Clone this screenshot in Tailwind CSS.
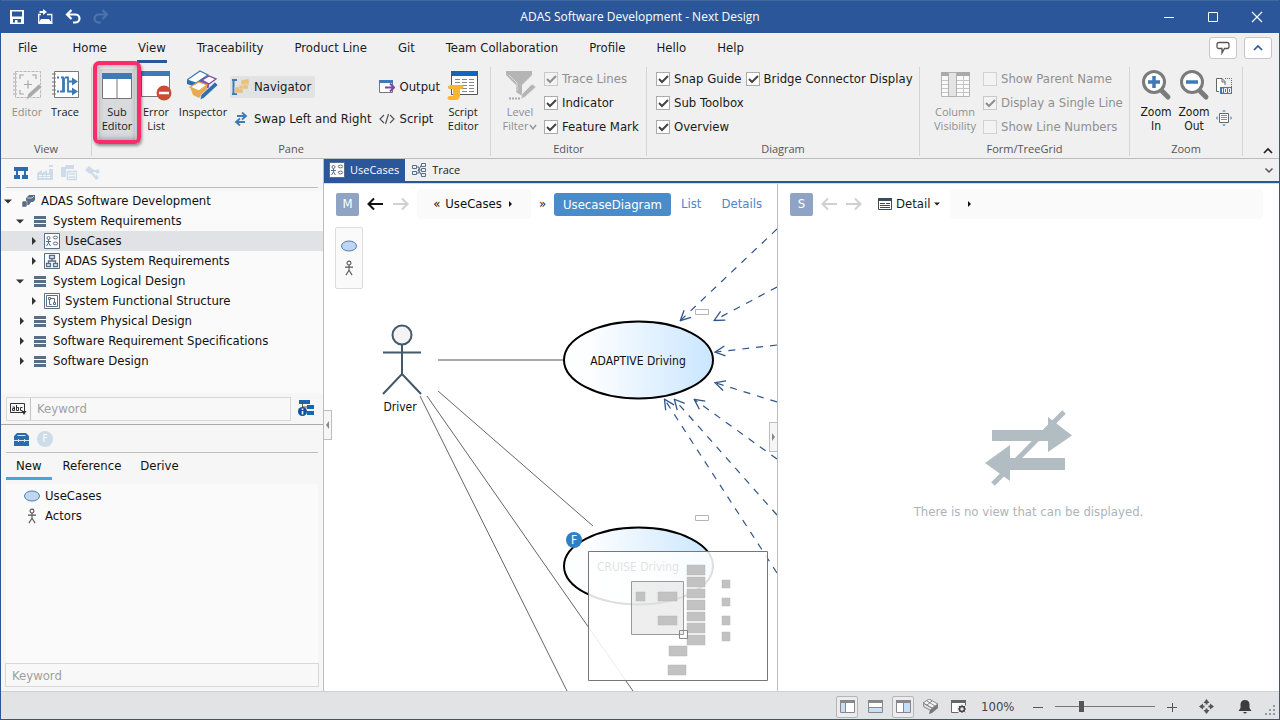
<!DOCTYPE html>
<html lang="en">
<head>
  <meta charset="UTF-8" />
  <meta name="viewport" content="width=device-width, initial-scale=1.0" />
  <title>ADAS Software Development - Next Design</title>
  <script src="https://cdn.jsdelivr.net/npm/@tailwindcss/browser@4"></script>
</head>
<body class="h-screen flex flex-col overflow-hidden border-x border-b border-[#2b579a] bg-[#f0f0f0] font-['DejaVu_Sans_Condensed','DejaVu_Sans',sans-serif] text-[13px] leading-5 text-[#1a1a1a]">

  <!-- shared icons -->
  <svg class="hidden">
    <symbol id="check" viewBox="0 0 14 14"><path d="M3 7l3 3 6-6" fill="none" stroke="currentColor" stroke-width="2" /></symbol>
    <symbol id="open" viewBox="0 0 8 8"><path d="M0 2.500h8l-4 4z" fill="#333" /></symbol>
    <symbol id="closed" viewBox="0 0 8 8"><path d="M2 0l4 4-4 4z" fill="#333" /></symbol>
    <symbol id="layers" viewBox="0 0 12 11"><path d="M0 0h12v3H0zM0 4h12v3H0zM0 8h12v3H0z" fill="#596d87" /></symbol>
    <symbol id="usecase" viewBox="0 0 16 16">
      <path d="M.5.5h15v15H.5z" fill="#fff" stroke="#596d87" />
      <g fill="none" stroke="#596d87"><circle cx="4.500" cy="5" r="1.500" /><path d="M4.500 6.500v3.500M2 8.500h5M2.500 13l2-3 2 3" /><ellipse cx="11.500" cy="4.500" rx="2.200" ry="1.400" /><ellipse cx="11.500" cy="10.500" rx="2.200" ry="1.400" /></g>
    </symbol>
    <symbol id="actor" viewBox="0 0 16 18"><g fill="none" stroke="#555" stroke-width="1.200"><circle cx="8" cy="3.500" r="2.200" /><path d="M8 5.700v6M3.500 8h9M4.500 17l3.500-5.500 3.500 5.500" /></g></symbol>
    <symbol id="bubble" viewBox="0 0 16 12"><ellipse cx="8" cy="6" rx="7.500" ry="5" fill="#bfd6ee" stroke="#4a80bd" /></symbol>
    <symbol id="left" viewBox="0 0 17 14"><path d="M16 7H1.500M7 1.500L1.500 7l5.500 5.500" fill="none" stroke="currentColor" stroke-width="2" /></symbol>
    <symbol id="right" viewBox="0 0 17 14"><path d="M1 7h14.500M10 1.500L15.500 7l-5.500 5.500" fill="none" stroke="currentColor" stroke-width="2" /></symbol>
  </svg>

  <!-- title bar -->
  <header class="grid grid-cols-[1fr_auto_1fr] items-center h-[33px] shrink-0 bg-[#2b579a] text-white border-t border-[#41699f]">
    <div class="flex items-center gap-3 pl-2">
      <button aria-label="Save" class="size-4"><svg class="size-4" viewBox="0 0 16 16"><path fill-rule="evenodd" d="M1 1h14v14H1zM3 2.500v5h10v-5zM4 10v3.500h2V11h2.500v2.500H12V10z" fill="#fff" /></svg></button>
      <button aria-label="Open" class="size-4"><svg class="size-4" viewBox="0 0 16 16"><path d="M1.700 14V5.500H4M10 5.500h4.800V14" fill="none" stroke="#fff" stroke-width="1.300" /><path d="M1 15l3-5h8l4 5zM6 0l4 3-4 3V4H2.500V2H6z" fill="#fff" /></svg></button>
      <button aria-label="Undo" class="size-4"><svg class="size-4" viewBox="0 0 16 16"><path d="M2 5.500h8a4.500 4 0 0 1 0 8H8M6.500 1L2 5.500 6.500 10" fill="none" stroke="#fff" stroke-width="2.200" /></svg></button>
      <button aria-label="Redo" class="size-4" disabled><svg class="size-4" viewBox="0 0 16 16"><path d="M14 5.500H6a4.500 4 0 0 0 0 8h2M9.500 1L14 5.500 9.500 10" fill="none" stroke="#4d73ab" stroke-width="2.200" /></svg></button>
    </div>
    <h1 class="text-[12px] font-['Open_Sans','Noto_Sans',sans-serif]">ADAS Software Development - Next Design</h1>
    <div class="flex justify-end gap-8 pr-4">
      <button aria-label="Minimize"><svg class="size-3" viewBox="0 0 12 12"><path d="M1 6.500h10" stroke="#fff" /></svg></button>
      <button aria-label="Maximize"><svg class="size-3" viewBox="0 0 12 12"><path d="M1.500 1.500h9v9h-9z" fill="none" stroke="#fff" /></svg></button>
      <button aria-label="Close"><svg class="size-3" viewBox="0 0 12 12"><path d="M1 1l10 10M11 1L1 11" stroke="#fff" stroke-width="1.200" /></svg></button>
    </div>
  </header>

  <!-- ribbon tabs -->
  <nav class="flex items-center h-[30px] shrink-0 pl-[17px] pr-[7px] gap-[31px]">
    <a href="#">File</a>
    <a href="#" class="ml-1">Home</a>
    <a href="#" class="relative">View<span class="absolute -left-px -right-px -bottom-[5px] h-[3px] bg-[#2b579a]"></span></a>
    <a href="#">Traceability</a>
    <a href="#">Product Line</a>
    <a href="#">Git</a>
    <a href="#">Team Collaboration</a>
    <a href="#">Profile</a>
    <a href="#">Hello</a>
    <a href="#">Help</a>
    <div class="ml-auto flex gap-[7px]">
      <button aria-label="Feedback" class="w-7 h-[22px] grid place-items-center bg-white border border-[#c6c6c6] rounded-[3px]"><svg class="size-[14px]" viewBox="0 0 14 14"><path d="M3 1.500h8q2 0 2 2v2q0 2-2 2H8.500L6 12V7.500H3q-2 0-2-2v-2q0-2 2-2z" fill="none" stroke="#555" stroke-width="1.300" /></svg></button>
      <button aria-label="Collapse" class="w-7 h-[22px] grid place-items-center bg-white border border-[#c6c6c6] rounded-[3px]"><svg class="size-[10px]" viewBox="0 0 10 10"><path d="M1 7l4-4 4 4" fill="none" stroke="#2b579a" stroke-width="1.700" /></svg></button>
    </div>
  </nav>

  <!-- ribbon -->
  <section class="flex h-[96px] shrink-0 pt-1 pb-[2px] border-b border-[#bdbdbd]">
    <div class="w-[91px] shrink-0 flex flex-col border-r border-[#d4d4d4] font-['Open_Sans','Noto_Sans',sans-serif] text-[11px] leading-[14px]">
      <div class="flex flex-1 pl-2 pt-[2px]">
        <button disabled class="w-9 flex flex-col items-center gap-1 text-[#8f8f8f] self-start">
          <svg class="size-8" viewBox="0 0 32 32"><path d="M4.500 2.500h25v26h-25z" fill="#f3f3f3" stroke="#b9b9b9" stroke-dasharray="3 1" /><path d="M2 5h4M2 9h4M2 13h4M2 17h4M2 21h4M2 25h4" stroke="#aaa" /><path d="M9 10V6h4M21 6h4v4M9 21v4h4M13 15.500h8M17 11.500v8" fill="none" stroke="#a8a8a8" stroke-width="1.200" /><path d="M15 31l2-6 11-10 3 3-11 10z" fill="#aaa" stroke="#f0f0f0" stroke-width=".6" /></svg>
          Editor
        </button>
        <button class="w-10 flex flex-col items-center gap-1 self-start">
          <svg class="size-8" viewBox="0 0 32 32"><path d="M5.500 2.500h24v26h-24z" fill="#fff" stroke="#777" /><path d="M3 5h4M3 9h4M3 13h4M3 17h4M3 21h4M3 25h4" stroke="#777" /><path d="M8 8.500h2M8 22.500h2M12 8.500h2v14h-3M16 8.500h3v14h7M12 22.500h3v-14M20 12.500h5" fill="none" stroke="#3c78b4" stroke-width="1.800" /><path d="M23 8.500l6 4-6 4zM23 18.500l6 4-6 4z" fill="#3c78b4" /></svg>
          Trace
        </button>
      </div>
      <h2 class="text-center text-[#555]">View</h2>
    </div>

    <div class="w-[399px] shrink-0 flex flex-col border-r border-[#d4d4d4]">
      <div class="flex flex-1 pl-[7px]">
        <div class="flex pt-[2px] font-['Open_Sans','Noto_Sans',sans-serif] text-[11px] leading-[14px]">
          <button aria-pressed="true" class="relative w-9 h-[71px] pt-1 flex flex-col items-center gap-1 self-start bg-[#d8dadd]">
            <svg class="w-[30px] h-7 shrink-0" viewBox="0 0 30 28"><path d="M.5 1.500h29v24H.5z" fill="#fff" stroke="#777" /><path d="M0 0h30v6H0z" fill="#3f79b6" /><path d="M15 6v19" stroke="#777" /></svg>
            Sub<br>Editor
            <span class="absolute -inset-x-[6px] -top-[8px] -bottom-[4px] border-4 border-[#fb2c6c] rounded-[6px] shadow-[1px_2px_3px_#0006,inset_0_0_6px_#0006]"></span>
          </button>
          <button class="w-[42px] flex flex-col items-center gap-1 self-start">
            <svg class="size-8 shrink-0" viewBox="0 0 32 32"><path d="M1.500 3.500h28v24h-28z" fill="#fff" stroke="#777" /><path d="M1 2h29v5H1z" fill="#3f79b6" /><circle cx="24" cy="24" r="7.500" fill="#cc4b37" /><path d="M19 24h10" stroke="#fff" stroke-width="2.500" /></svg>
            Error<br>List
          </button>
          <button class="w-[52px] flex flex-col items-center gap-1 self-start">
            <svg class="size-8" viewBox="0 0 32 32"><path d="M0 11L13 2l8 4-12 8z" fill="#fff" stroke="#3c78b4" stroke-width="1.300" /><path d="M0 11l9 3v4l-9-3z" fill="#2f6fb0" /><path d="M9 14L17 9v4l-8 5z" fill="#2f6fb0" /><path d="M15 11l7-4 7 3-7 5z" fill="#fff" stroke="#7d48a5" stroke-width="1.300" /><path d="M15 11l7 4v5l-7-4z" fill="#8a50b0" /><path d="M3 18l9-5 8 3-8 6z" fill="#fff" stroke="#e5a64a" stroke-width="1.300" /><path d="M3 18l9 4 8-6v6l-8 7-6-3z" fill="#e8ab54" /><path d="M13 31l1-5L28 13l3 3-14 13z" fill="#2f6fb0" stroke="#fff" stroke-width=".6" /></svg>
            Inspector
          </button>
        </div>
        <div class="flex flex-col gap-[10px] pt-[9px] pl-[1px] items-start">
          <button aria-pressed="true" class="flex items-center gap-[5px] h-[22px] pl-[2px] pr-1 bg-[#e1e2e4] rounded-[2px]"><svg class="w-[17px] h-4 shrink-0" viewBox="0 0 17 16"><path d="M0 1h5M0 15h5M1.500 0v15" fill="none" stroke="#3f79b6" stroke-width="2" /><path d="M9 1h3l1-1h4v6H9zM7 6h3l1-1h5v5H7zM3 8h3l1-1h4v7H3z" fill="#eabf78" stroke="#e1e2e4" stroke-width=".5" /></svg>Navigator</button>
          <button class="flex items-center gap-[6px] h-[22px] pl-1"><svg class="size-[14px] shrink-0" viewBox="0 0 14 14"><path d="M3 4h8M3 10h8" stroke="#3f79b6" stroke-width="2" /><path d="M8 .5L12 4 8 7.500M6 6.500L2 10l4 3.500" fill="none" stroke="#3f79b6" stroke-width="1.800" /></svg>Swap Left and Right</button>
        </div>
        <div class="flex flex-col gap-[10px] pt-[9px] pl-2 items-start">
          <button class="flex items-center gap-1 h-[22px]"><svg class="size-4 shrink-0" viewBox="0 0 16 16"><path d="M.5 2.500h13v11H.5z" fill="#fff" stroke="#777" /><path d="M0 1h14v3H0z" fill="#3f79b6" /><path d="M6 8.500h8M11 4.500l4 4-4 4" fill="none" stroke="#7d48a5" stroke-width="2" /></svg>Output</button>
          <button class="flex items-center gap-1 h-[22px]"><svg class="size-4 shrink-0" viewBox="0 0 16 16"><path d="M5 4L1 8l4 4M11 4l4 4-4 4M9.500 3l-3 10" fill="none" stroke="#555" stroke-width="1.200" /></svg>Script</button>
        </div>
        <button class="w-[38px] ml-1 pt-[2px] flex flex-col items-center gap-1 self-start font-['Open_Sans','Noto_Sans',sans-serif] text-[11px] leading-[14px]">
          <svg class="size-8 shrink-0" viewBox="0 0 32 32"><path d="M4.500 3.500h26v22h-26z" fill="#fff" stroke="#555" /><path d="M4 2h27v5H4z" fill="#1565b8" /><path d="M8 10.500h5M15 10.500h5M22 10.500h5M8 13.500h5M15 13.500h5M22 13.500h5M15 16.500h5M22 16.500h5M15 19.500h5M22 19.500h5M15 22.500h5M22 22.500h5" stroke="#888" /><path d="M4 16h11q3 2 0 4h-2v7q-1 4-4 4H2q-3-2 0-4h4v-7H2q-3-3 2-4z" fill="#fdb42f" /></svg>
          Script<br>Editor
        </button>
      </div>
      <h2 class="text-center text-[#555] font-['Open_Sans','Noto_Sans',sans-serif] text-[11px] leading-[14px]">Pane</h2>
    </div>

    <div class="w-[156px] shrink-0 flex flex-col border-r border-[#d4d4d4]">
      <div class="flex flex-1 pl-2">
        <button disabled class="w-[42px] pt-[2px] flex flex-col items-center gap-1 self-start text-[#8f8f8f] font-['Open_Sans','Noto_Sans',sans-serif] text-[11px] leading-[14px]">
          <svg class="size-8 shrink-0" viewBox="0 0 32 32"><path d="M2 2h26v4L18 16v11l-6-4v-7L2 6z" fill="#b5b5b5" /><path d="M5 6l8 8v8" fill="none" stroke="#ddd" /><path d="M5 29.500h12" stroke="#aaa" stroke-width="2" stroke-dasharray="2 1" /><path d="M17 30l1-5 10-10 4 3-11 10z" fill="#b5b5b5" stroke="#f0f0f0" stroke-width=".6" /></svg>
          <span>Level<br>Filter<svg class="inline size-2 ml-px" viewBox="0 0 8 8"><path d="M1 2l3 4 3-4" fill="none" stroke="#8f8f8f" stroke-width="1.300" /></svg></span>
        </button>
        <div class="flex flex-col pl-[3px]">
          <label class="flex items-center gap-1 h-6 text-[#8f8f8f]"><span class="grid"><input type="checkbox" checked disabled class="appearance-none size-[14px] border border-[#c9c9c9] bg-[#f3f3f3] [grid-area:1/1]"><svg class="size-[14px] [grid-area:1/1]"><use href="#check" /></svg></span>Trace Lines</label>
          <label class="flex items-center gap-1 h-6"><span class="grid"><input type="checkbox" checked class="appearance-none size-[14px] border border-[#ababab] bg-white [grid-area:1/1]"><svg class="size-[14px] [grid-area:1/1] text-[#444] pointer-events-none"><use href="#check" /></svg></span>Indicator</label>
          <label class="flex items-center gap-1 h-6"><span class="grid"><input type="checkbox" checked class="appearance-none size-[14px] border border-[#ababab] bg-white [grid-area:1/1]"><svg class="size-[14px] [grid-area:1/1] text-[#444] pointer-events-none"><use href="#check" /></svg></span>Feature Mark</label>
        </div>
      </div>
      <h2 class="text-center text-[#555] font-['Open_Sans','Noto_Sans',sans-serif] text-[11px] leading-[14px]">Editor</h2>
    </div>

    <div class="w-[273px] shrink-0 flex flex-col border-r border-[#d4d4d4]">
      <div class="flex flex-1 gap-[2px] pl-[9px]">
        <div class="flex flex-col">
          <label class="flex items-center gap-1 h-6"><span class="grid"><input type="checkbox" checked class="appearance-none size-[14px] border border-[#ababab] bg-white [grid-area:1/1]"><svg class="size-[14px] [grid-area:1/1] text-[#444] pointer-events-none"><use href="#check" /></svg></span>Snap Guide</label>
          <label class="flex items-center gap-1 h-6"><span class="grid"><input type="checkbox" checked class="appearance-none size-[14px] border border-[#ababab] bg-white [grid-area:1/1]"><svg class="size-[14px] [grid-area:1/1] text-[#444] pointer-events-none"><use href="#check" /></svg></span>Sub Toolbox</label>
          <label class="flex items-center gap-1 h-6"><span class="grid"><input type="checkbox" checked class="appearance-none size-[14px] border border-[#ababab] bg-white [grid-area:1/1]"><svg class="size-[14px] [grid-area:1/1] text-[#444] pointer-events-none"><use href="#check" /></svg></span>Overview</label>
        </div>
        <label class="flex items-center gap-1 h-6 whitespace-nowrap"><span class="grid"><input type="checkbox" checked class="appearance-none size-[14px] border border-[#ababab] bg-white [grid-area:1/1]"><svg class="size-[14px] [grid-area:1/1] text-[#444] pointer-events-none"><use href="#check" /></svg></span>Bridge Connector Display</label>
      </div>
      <h2 class="text-center text-[#555] font-['Open_Sans','Noto_Sans',sans-serif] text-[11px] leading-[14px]">Diagram</h2>
    </div>

    <div class="w-[210px] shrink-0 flex flex-col border-r border-[#d4d4d4]">
      <div class="flex flex-1 pl-3 text-[#8f8f8f]">
        <button disabled class="w-[46px] pt-[2px] flex flex-col items-center gap-1 self-start font-['Open_Sans','Noto_Sans',sans-serif] text-[11px] leading-[14px]">
          <svg class="size-8 shrink-0" viewBox="0 0 32 32"><path d="M2.500 3.500h28v24h-28z" fill="#fafafa" stroke="#b5b5b5" /><path d="M2 3h29v4H2z" fill="#aaa" /><path d="M3 11.500h27M3 15.500h27M3 19.500h27M3 23.500h27M24.500 7v20" stroke="#c5c5c5" /><path d="M9.500 3.500h8v24h-8z" fill="#e4e4e4" stroke="#b0b0b0" /></svg>
          Column<br>Visibility
        </button>
        <div class="flex flex-col pl-[5px] whitespace-nowrap">
          <label class="flex items-center gap-1 h-6"><input type="checkbox" disabled class="appearance-none size-[14px] border border-[#d2d2d2] bg-[#f3f3f3]">Show Parent Name</label>
          <label class="flex items-center gap-1 h-6"><span class="grid"><input type="checkbox" checked disabled class="appearance-none size-[14px] border border-[#c9c9c9] bg-[#f3f3f3] [grid-area:1/1]"><svg class="size-[14px] [grid-area:1/1]"><use href="#check" /></svg></span>Display a Single Line</label>
          <label class="flex items-center gap-1 h-6"><input type="checkbox" disabled class="appearance-none size-[14px] border border-[#d2d2d2] bg-[#f3f3f3]">Show Line Numbers</label>
        </div>
      </div>
      <h2 class="text-center text-[#555] font-['Open_Sans','Noto_Sans',sans-serif] text-[11px] leading-[14px]">Form/TreeGrid</h2>
    </div>

    <div class="w-[113px] shrink-0 flex flex-col border-r border-[#d4d4d4] font-['Open_Sans','Noto_Sans',sans-serif] text-[11px] leading-[14px]">
      <div class="flex flex-1 pl-[7px] pt-[2px]">
        <button class="w-[38px] flex flex-col items-center gap-1 self-start">
          <svg class="size-8 shrink-0" viewBox="0 0 32 32"><path d="M20 20l8 8" stroke="#7b7b7b" stroke-width="5" stroke-linecap="round" /><circle cx="14" cy="13" r="10.500" fill="#fff" stroke="#7b7b7b" stroke-width="3" /><path d="M8 13h12M14 7v12" stroke="#3f79b6" stroke-width="3.500" /></svg>
          <span class="font-['DejaVu_Sans_Condensed','DejaVu_Sans',sans-serif] text-[12px] leading-[14px]">Zoom<br>In</span>
        </button>
        <button class="w-[38px] flex flex-col items-center gap-1 self-start">
          <svg class="size-8 shrink-0" viewBox="0 0 32 32"><path d="M20 20l8 8" stroke="#7b7b7b" stroke-width="5" stroke-linecap="round" /><circle cx="14" cy="13" r="10.500" fill="#fff" stroke="#7b7b7b" stroke-width="3" /><path d="M8 13h12" stroke="#3f79b6" stroke-width="3.500" /></svg>
          <span class="font-['DejaVu_Sans_Condensed','DejaVu_Sans',sans-serif] text-[12px] leading-[14px]">Zoom<br>Out</span>
        </button>
        <div class="flex flex-col gap-4 pt-[9px] pl-[3px]">
          <button aria-label="Zoom 100%"><svg class="size-4" viewBox="0 0 16 16"><path d="M3 13.500H.5V.5H6l3 3V7M6 .5V4h3" fill="#fff" stroke="#666" /><path d="M9 .5h6.500V9" fill="none" stroke="#666" stroke-dasharray="1 1" /><path d="M4 9h12v7H4z" fill="#3f79b6" /><path d="M6.500 10.500v4M8.500 10.500h2v4h-2zM12.500 10.500h2v4h-2z" fill="none" stroke="#fff" /></svg></button>
          <button aria-label="Fit"><svg class="size-4" viewBox="0 0 16 16"><path d="M3.500 3.500h9v9h-9z" fill="#fff" stroke="#666" /><path d="M5 5.500h6M5 7.500h6M5 9.500h6" stroke="#888" /><path d="M6 1.500L8 0l2 1.500zM6 14.500L8 16l2-1.500zM1.500 6L0 8l1.500 2zM14.500 6L16 8l-1.500 2z" fill="#3f79b6" /></svg></button>
        </div>
      </div>
      <h2 class="text-center text-[#555]">Zoom</h2>
    </div>
    <button aria-label="Collapse the ribbon" class="ml-auto mr-[6px] self-end"><svg class="w-[10px] h-[9px]" viewBox="0 0 10 9"><path d="M1 6l4-4 4 4" fill="none" stroke="#222" stroke-width="1.700" /></svg></button>
  </section>

  <main class="flex flex-1 min-h-0">
    <!-- navigator and toolbox -->
    <aside class="w-[323px] shrink-0 flex flex-col border-r border-[#bdbdbd] bg-[#f6f6f6]">
      <div class="flex items-center gap-2 h-[29px] shrink-0 mx-[5px] pl-2 border-b border-[#bdbdbd]">
        <button aria-label="Model"><svg class="w-[14px] h-4 mr-px" viewBox="0 0 14 16"><path d="M0 2h14v4H0zM0 10h6v4H0zM8 10h6v4H8z" fill="#2a6cad" /><path d="M3 5v6M11 5v6" stroke="#2a6cad" stroke-width="2" /></svg></button>
        <button aria-label="Product line"><svg class="size-4" viewBox="0 0 16 16"><path d="M0 15V8l5-3v3l5-3v3h2V4h4v11zM12 0h4v2h-4z" fill="#cddce8" /><path d="M2 10.500h12M2 12.500h12" stroke="#f6f6f6" stroke-dasharray="3 1" /></svg></button>
        <button aria-label="Project"><svg class="size-4" viewBox="0 0 16 16"><path d="M0 2h4l1-2h8v4H5v8H0z" fill="#cddce8" /><path d="M6.500 6.500h9v8h-9z" fill="#f6f6f6" stroke="#cddce8" stroke-width="1.500" /><path d="M8 9h6M8 12h6" stroke="#cddce8" stroke-width="1.500" /></svg></button>
        <button aria-label="Profile"><svg class="size-4" viewBox="0 0 16 16"><path d="M0 5l4-4 5 4-4 4zM10 6l3-2 2 3-3 2zM9 12l3-2 2 3-3 2z" fill="#cddce8" /><path d="M6 7l5 6M7 6h5" stroke="#cddce8" stroke-width="2" /></svg></button>
      </div>

      <ul class="grow shrink-0 mt-[3px] bg-[#fafafa] text-[#111]">
        <li class="flex items-center h-5 pl-[3px]"><svg class="size-2"><use href="#open" /></svg><svg class="size-[14px] ml-[10px] mr-[5px]" viewBox="0 0 14 14"><path d="M4 4l3-3h6v5l-2 2H9l-2 3H4z" fill="#596d87" /><path d="M5 4h5l2-2" fill="none" stroke="#c6cfd9" /><path d="M0 8l1-1h4v5l-1 1H0z" fill="#596d87" stroke="#fafafa" stroke-width=".5" /></svg>ADAS Software Development</li>
        <li class="flex items-center h-5 pl-[15px]"><svg class="size-2"><use href="#open" /></svg><svg class="w-3 h-[11px] ml-[10px] mr-[7px]"><use href="#layers" /></svg>System Requirements</li>
        <li class="flex items-center h-5 pl-[29px] bg-[#e1e2e6]"><svg class="size-2"><use href="#closed" /></svg><svg class="size-4 ml-[6px] mr-[5px]"><use href="#usecase" /></svg>UseCases</li>
        <li class="flex items-center h-5 pl-[29px]"><svg class="size-2"><use href="#closed" /></svg><svg class="size-4 ml-[6px] mr-[5px]" viewBox="0 0 16 16"><path d="M.5.500h15v15H.5z" fill="#fff" stroke="#596d87" /><path d="M5.500 2.500h5v3h-5zM2.500 10.500h4v3h-4zM9.500 10.500h4v3h-4zM8 6v2M4.500 10V8h7v2" fill="none" stroke="#596d87" stroke-width="1.300" /></svg>ADAS System Requirements</li>
        <li class="flex items-center h-5 pl-[15px]"><svg class="size-2"><use href="#open" /></svg><svg class="w-3 h-[11px] ml-[10px] mr-[7px]"><use href="#layers" /></svg>System Logical Design</li>
        <li class="flex items-center h-5 pl-[29px]"><svg class="size-2"><use href="#closed" /></svg><svg class="size-4 ml-[6px] mr-[5px]" viewBox="0 0 16 16"><path d="M.5.500h15v15H.5zM2.500 2.500h11v11h-11z" fill="#fff" stroke="#596d87" /><path d="M4.500 4.500h2v2h-2zM9.500 9.500h2v2h-2zM6.500 5.500h4v4M5.500 6.500v5h2" fill="none" stroke="#596d87" /></svg>System Functional Structure</li>
        <li class="flex items-center h-5 pl-[17px]"><svg class="size-2"><use href="#closed" /></svg><svg class="w-3 h-[11px] ml-2 mr-[7px]"><use href="#layers" /></svg>System Physical Design</li>
        <li class="flex items-center h-5 pl-[17px]"><svg class="size-2"><use href="#closed" /></svg><svg class="w-3 h-[11px] ml-2 mr-[7px]"><use href="#layers" /></svg>Software Requirement Specifications</li>
        <li class="flex items-center h-5 pl-[17px]"><svg class="size-2"><use href="#closed" /></svg><svg class="w-3 h-[11px] ml-2 mr-[7px]"><use href="#layers" /></svg>Software Design</li>
      </ul>

      <div class="flex items-center gap-[7px] h-8 shrink-0 pl-[5px] pr-2 border-b border-[#ababab]">
        <div class="flex flex-1 items-center h-6 border border-[#d8d8d8] bg-[#f8f8f8]">
          <button aria-label="Search target" class="w-6 h-[22px] grid place-items-center border-r border-[#bcc4ca]"><svg class="w-[17px] h-[13px]" viewBox="0 0 17 13"><path d="M.5 1.500h14v9H.5z" fill="none" stroke="#333" /><path d="M2.500 5h2v3.500h-2v-2h2M6.500 3v5.500h2V5.500h-2M12.500 5.500h-2v3h2" fill="none" stroke="#333" /><path d="M11.500 9h5L14 13z" fill="#333" /></svg></button>
          <input type="text" placeholder="Keyword" aria-label="Filter the tree" class="flex-1 min-w-0 px-[6px] bg-transparent placeholder:text-[#a0a0a0]">
        </div>
        <button aria-label="Display settings" class="size-[17px]"><svg class="size-[17px]" viewBox="0 0 17 17"><path d="M1 0h11v4H1zM9 5h7v4H9zM9 11h7v4H9z" fill="#1565b8" /><path d="M4.500 4v4M4 7h5" stroke="#555" /><circle cx="4.500" cy="11.500" r="4.500" fill="#1050a0" /><path d="M4.500 8.500V10M4.500 11v3.500" stroke="#fff" stroke-width="1.600" /></svg></button>
      </div>

      <div class="flex items-center gap-2 h-[28px] shrink-0 mx-[5px] pl-2 border-b border-[#bdbdbd]">
        <button aria-label="Toolbox"><svg class="w-[15px] h-4" viewBox="0 0 15 16"><path d="M0 5l3-3h9l3 3v4H0zM0 10h15v5H0z" fill="#2a6cad" /><path d="M3.500 4.500h8M0 9.500h15M4.500 8v3M10.500 8v3" stroke="#dbe6f0" /></svg></button>
        <button aria-label="Feature" class="size-4 rounded-full bg-[#cddce8] text-white text-[10px] leading-4">F</button>
      </div>
      <nav class="flex gap-[11px] h-[27px] shrink-0 pl-[5px] text-[#111]">
        <a href="#" class="h-[27px] px-[10px] leading-[25px] border-b-[3px] border-[#4ba3dc]">New</a>
        <a href="#" class="leading-[25px]">Reference</a>
        <a href="#" class="leading-[25px] ml-2">Derive</a>
      </nav>
      <ul class="h-[179px] shrink-0 mx-[5px] mt-1 bg-[#fafafa] pt-[2px] text-[#111]">
        <li class="flex items-center gap-[5px] h-5 pl-[18px]"><svg class="w-4 h-3"><use href="#bubble" /></svg>UseCases</li>
        <li class="flex items-center gap-[5px] h-5 pl-[18px]"><svg class="size-4"><use href="#actor" /></svg>Actors</li>
      </ul>
      <input type="text" placeholder="Keyword" aria-label="Filter the toolbox" class="h-6 shrink-0 ml-1 mr-[4px] mb-[4px] px-[6px] border border-[#d8d8d8] bg-[#f8f8f8] placeholder:text-[#a0a0a0]">
    </aside>

    <div class="flex-1 min-w-0 flex flex-col">
      <div class="flex h-6 shrink-0 border-b-2 border-[#2b579a] font-['Open_Sans','Noto_Sans',sans-serif] text-[11px]">
        <a href="#" class="flex items-center gap-[5px] pl-[5px] pr-[6px] bg-[#2b579a] text-white"><svg class="size-4"><use href="#usecase" /></svg>UseCases</a>
        <a href="#" class="flex items-center gap-[6px] pl-[7px]"><svg class="size-[14px]" viewBox="0 0 14 14"><path d="M.5 2.500h4v3h-4zM.5 8.500h4v3h-4zM9.500.5h4v3h-4zM9.500 5.500h4v3h-4zM9.500 10.500h4v3h-4zM4.500 4H7v6M4.500 10h3M6 8l3.500-6M6 7h3.500M7 8l2.500 4" fill="none" stroke="#596d87" /></svg>Trace</a>
        <button aria-label="Tab list" class="ml-auto mr-[5px]"><svg class="size-[10px]" viewBox="0 0 10 10"><path d="M1.500 3.500L5 7l3.500-3.500" fill="none" stroke="#555" stroke-width="1.500" /></svg></button>
      </div>

      <div class="flex flex-1 min-h-0 bg-white border-t border-[#dcdcdc]">
        <!-- main editor -->
        <section class="relative w-[454px] shrink-0 flex flex-col overflow-hidden border-r border-[#bdbdbd]">
          <div class="flex items-center h-10 shrink-0 pl-3 whitespace-nowrap">
            <span class="size-[23px] grid place-items-center rounded-[2px] bg-[#8fa4c4] text-white">M</span>
            <button aria-label="Back" class="ml-2 text-[#111]"><svg class="w-[17px] h-[14px]"><use href="#left" /></svg></button>
            <button aria-label="Forward" class="ml-2 text-[#d0d0d0]"><svg class="w-[17px] h-[14px]"><use href="#right" /></svg></button>
            <div class="flex items-center justify-center gap-[5px] w-[114px] h-[30px] ml-2 bg-[#fafafa] rounded-[3px] text-[#111]"><span>«</span>UseCases<svg class="size-2" viewBox="0 0 8 8"><path d="M2 1l3 3-3 3z" fill="#111" /></svg></div>
            <span class="w-[23px] text-center">»</span>
            <a href="#" class="h-[23px] px-[9px] leading-[24px] rounded-[3px] bg-[#4a8cca] text-white">UsecaseDiagram</a>
            <a href="#" class="ml-[10px] text-[#4a86c8]">List</a>
            <a href="#" class="ml-5 text-[#4a86c8]">Details</a>
          </div>

          <div class="relative flex-1 min-h-0 overflow-hidden">
            <svg class="absolute inset-0 w-full h-full">
              <defs>
                <linearGradient id="fade"><stop offset="0" stop-color="#fff" /><stop offset=".2" stop-color="#fbfdff" /><stop offset="1" stop-color="#cae6ff" /></linearGradient>
                <marker id="arrow" viewBox="0 0 14 12" refX="12" refY="6" markerWidth="14" markerHeight="12" markerUnits="userSpaceOnUse" orient="auto"><path d="M3 1l10 5-10 5" fill="none" stroke="#2f5488" stroke-width="1.300" /></marker>
              </defs>
              <g transform="translate(-324 -224)">
                <path d="M438 360h125" stroke="#a8a8a8" stroke-width="2" />
                <path d="M438 391l155 135M427 396l206 295M420 396l147 295" stroke="#666" />
                <g fill="none" stroke="#2f5488" stroke-width="1.200" stroke-dasharray="7 7">
                  <path d="M777 229l-96 91" marker-end="url(#arrow)" />
                  <path d="M777 287l-62 33" marker-end="url(#arrow)" />
                  <path d="M777 345l-61 7" marker-end="url(#arrow)" />
                  <path d="M777 402l-61-19" marker-end="url(#arrow)" />
                  <path d="M777 459l-82-59" marker-end="url(#arrow)" />
                  <path d="M777 515L675 400" marker-end="url(#arrow)" />
                  <path d="M777 573L665 400" marker-end="url(#arrow)" />
                </g>
                <g fill="none" stroke="#44596a" stroke-width="2">
                  <circle cx="402" cy="335" r="9.500" fill="#f3f3f3" />
                  <path d="M402 345v29M383 352.500h38M383 394l19-20 19 20" />
                </g>
                <text x="400" y="411" text-anchor="middle" font-size="12" fill="#111">Driver</text>
                <ellipse cx="638.500" cy="360" rx="74.500" ry="38.500" fill="url(#fade)" stroke="#000" stroke-width="2" />
                <text x="638" y="365" text-anchor="middle" font-size="12" fill="#111">ADAPTIVE Driving</text>
                <ellipse cx="638.500" cy="566" rx="74.500" ry="38.500" fill="url(#fade)" stroke="#000" stroke-width="2" />
                <text x="638" y="571" text-anchor="middle" font-size="12" fill="#111">CRUISE Driving</text>
                <path d="M695.500 309.500h13v5h-13zM695.500 515.500h13v5h-13z" fill="#fff" stroke="#b5b5b5" />
                <circle cx="574" cy="540" r="8" fill="#2e7fc4" />
                <text x="574" y="544" text-anchor="middle" font-size="12" fill="#fff">F</text>
              </g>
            </svg>

            <div class="absolute left-[11px] top-[3px] w-7 flex flex-col items-center gap-2 py-3 border border-[#dcdcdc] rounded-[2px] bg-[#fafafa]">
              <svg class="w-4 h-3"><use href="#bubble" /></svg>
              <svg class="size-4"><use href="#actor" /></svg>
            </div>

            <!-- overview -->
            <svg class="absolute right-[9px] bottom-[10px] w-[180px] h-[130px]" viewBox="588 551 180 130">
              <path d="M588.500 551.500h179v129h-179z" fill="#fff" fill-opacity=".87" stroke="#777" />
              <path d="M631.500 581.500h52v53h-52z" fill="#ddd" fill-opacity=".5" stroke="#999" />
              <path d="M687 565h18v10h-18zM687 577h18v10h-18zM687 589h18v9h-18zM687 600h18v10h-18zM687 612h18v9h-18zM687 623h18v10h-18zM687 635h18v10h-18zM658 592h19v9h-19zM658 616h19v9h-19zM636 592h9v9h-9zM669 646h18v10h-18zM668 665h18v10h-18zM722 580h8v8h-8zM722 598h8v8h-8zM722 616h8v9h-8zM722 632h8v9h-8z" fill="#c2c2c2" stroke="#b5b5b5" stroke-width=".5" />
              <path d="M679.500 630.500h8v8h-8z" fill="none" stroke="#888" />
            </svg>
          </div>
          <button aria-label="Hide the navigator" class="absolute left-0 top-[226px] w-2 h-[30px] grid place-items-center border border-l-0 border-[#bdbdbd] bg-[#f6f6f6]"><svg class="w-[5px] h-2" viewBox="0 0 5 8"><path d="M4 0v8L1 4z" fill="#888" /></svg></button>
          <button aria-label="Hide the sub editor" class="absolute right-0 top-[238px] w-2 h-[30px] grid place-items-center border border-r-0 border-[#bdbdbd] bg-[#f6f6f6]"><svg class="w-[5px] h-2" viewBox="0 0 5 8"><path d="M1 0v8l3-4z" fill="#888" /></svg></button>
        </section>

        <!-- sub editor -->
        <section class="flex-1 min-w-0 flex flex-col">
          <div class="flex items-center h-10 shrink-0 pl-3 pr-4">
            <span class="size-[23px] grid place-items-center rounded-[2px] bg-[#8fa4c4] text-white">S</span>
            <button aria-label="Back" class="ml-2 text-[#d0d0d0]"><svg class="w-[17px] h-[14px]"><use href="#left" /></svg></button>
            <button aria-label="Forward" class="ml-[7px] text-[#d0d0d0]"><svg class="w-[17px] h-[14px]"><use href="#right" /></svg></button>
            <button class="flex items-center gap-1 ml-4"><svg class="w-[14px] h-3" viewBox="0 0 14 12"><path d="M.5.500h13v11H.5z" fill="#fff" stroke="#3b4c5c" /><path d="M0 0h14v3H0z" fill="#3b4c5c" /><path d="M2 5.500h5M8 5.500h4M2 7.500h10M2 9.500h10" stroke="#3b4c5c" /></svg>Detail<svg class="size-[6px]" viewBox="0 0 6 6"><path d="M0 1.500h6l-3 3z" fill="#222" /></svg></button>
            <div class="flex-1 flex items-center h-[30px] ml-[10px] pl-[15px] bg-[#fafafa] rounded-[3px]"><svg class="size-2" viewBox="0 0 8 8"><path d="M3 1l3 3-3 3z" fill="#111" /></svg></div>
          </div>
          <div class="flex-1 flex flex-col items-center justify-center gap-[15px] pt-[17px] text-[#aab4bc]">
            <svg class="w-[88px] h-[77px]" viewBox="0 0 88 77"><path d="M7 20h56V7l24 18.500L63 42V31H7z" fill="#b1bcc3" /><path d="M80 48H25V35L0 53l25 18V60h55z" fill="#b1bcc3" /><path d="M8 74l71-72" stroke="#b1bcc3" stroke-width="5" /></svg>
            <p>There is no view that can be displayed.</p>
          </div>
        </section>
      </div>
    </div>
  </main>

  <!-- status bar -->
  <footer class="flex items-center justify-end h-[28px] shrink-0 pt-[2px] pr-1 bg-[#e2e3e5] border-t border-[#d0d0d0] text-[#444]">
    <button aria-label="Navigator pane" aria-pressed="true" class="size-[22px] grid place-items-center border border-[#b5b5b5] rounded-[2px] bg-[#ececee]"><svg class="w-[15px] h-[13px]" viewBox="0 0 15 13"><path d="M.5.500h14v12H.5z" fill="#fff" stroke="#888" /><path d="M1 3h4v9H1z" fill="#c5dffa" /><path d="M0 0h15v3H0z" fill="#888" /><path d="M5.500 3v9" stroke="#888" /></svg></button>
    <button aria-label="Error list pane" class="size-[22px] grid place-items-center ml-[6px]"><svg class="w-[15px] h-[13px]" viewBox="0 0 15 13"><path d="M.5.500h14v12H.5z" fill="#fff" stroke="#888" /><path d="M1 8h13v4H1z" fill="#c5dffa" /><path d="M0 0h15v3H0z" fill="#888" /><path d="M1 7.500h13" stroke="#888" /></svg></button>
    <button aria-label="Sub editor pane" aria-pressed="true" class="size-[22px] grid place-items-center ml-[6px] border border-[#b5b5b5] rounded-[2px] bg-[#ececee]"><svg class="w-[15px] h-[13px]" viewBox="0 0 15 13"><path d="M.5.500h14v12H.5z" fill="#fff" stroke="#888" /><path d="M8 3h6v9H8z" fill="#c5dffa" /><path d="M0 0h15v3H0z" fill="#888" /><path d="M7.500 3v9" stroke="#888" /></svg></button>
    <button aria-label="Inspector" class="ml-[9px]"><svg class="w-4 h-[15px]" viewBox="0 0 16 15"><path d="M0 4l6-4 9 5-6 4z" fill="#f4f4f4" stroke="#888" /><path d="M0 4l9 5v3L1 8zM4 2l8 5M9 2L4 6" fill="none" stroke="#888" /><path d="M6 15l1-4 8-6v4l-6 5z" fill="#777" /></svg></button>
    <button aria-label="Display options" class="ml-[12px]"><svg class="w-4 h-[14px]" viewBox="0 0 16 14"><path d="M.5.500h14v12H.5z" fill="#fff" stroke="#666" /><path d="M0 0h15v3H0z" fill="#666" /><circle cx="11" cy="9" r="5" fill="#e8e8e8" /><circle cx="11" cy="9" r="2.500" fill="none" stroke="#444" stroke-width="1.500" /><path d="M11 5v8M7 9h8M8 6l6 6M14 6l-6 6" stroke="#444" stroke-dasharray="1.500 5" /></svg></button>
    <span class="w-[38px] ml-[14px]">100%</span>
    <button aria-label="Zoom out" class="ml-[14px]"><svg class="size-[10px]" viewBox="0 0 10 10"><path d="M0 5.500h10" stroke="#555" /></svg></button>
    <input type="range" min="0" max="100" value="25" aria-label="Zoom" class="w-[100px] ml-[12px] h-[11px] appearance-none bg-[linear-gradient(#777,#777)] bg-[length:100%_1px] bg-center bg-no-repeat [&::-webkit-slider-thumb]:appearance-none [&::-webkit-slider-thumb]:w-[5px] [&::-webkit-slider-thumb]:h-[11px] [&::-webkit-slider-thumb]:bg-[#555]">
    <button aria-label="Zoom in" class="ml-[12px]"><svg class="size-[10px]" viewBox="0 0 10 10"><path d="M0 5.500h10M5.500 1v9" stroke="#555" /></svg></button>
    <button aria-label="Fit to window" class="ml-[22px]"><svg class="size-[15px]" viewBox="0 0 15 15"><path d="M7.500 0l3 4h-6zM7.500 15l3-4h-6zM0 7.500l4-3v6zM15 7.500l-4-3v6z" fill="#555" /><path d="M7.500 3v2.500M7.500 12V9.500M3 7.500h2.500M12 7.500H9.500" stroke="#555" stroke-width="2" /></svg></button>
    <button aria-label="Notifications" class="ml-[24px]"><svg class="size-[14px]" viewBox="0 0 14 14"><path d="M7 0q4 0 4.500 4v4l2 3H.5l2-3V4Q3 0 7 0zM5 12h4q-2 3-4 0z" fill="#3c3c3c" /></svg></button>
    <svg class="size-[10px] ml-[13px] self-end mb-1" viewBox="0 0 10 10"><path d="M8 0h2v2H8zM4 4h2v2H4zM8 4h2v2H8zM0 8h2v2H0zM4 8h2v2H4zM8 8h2v2H8z" fill="#999" /></svg>
  </footer>
</body>
</html>
